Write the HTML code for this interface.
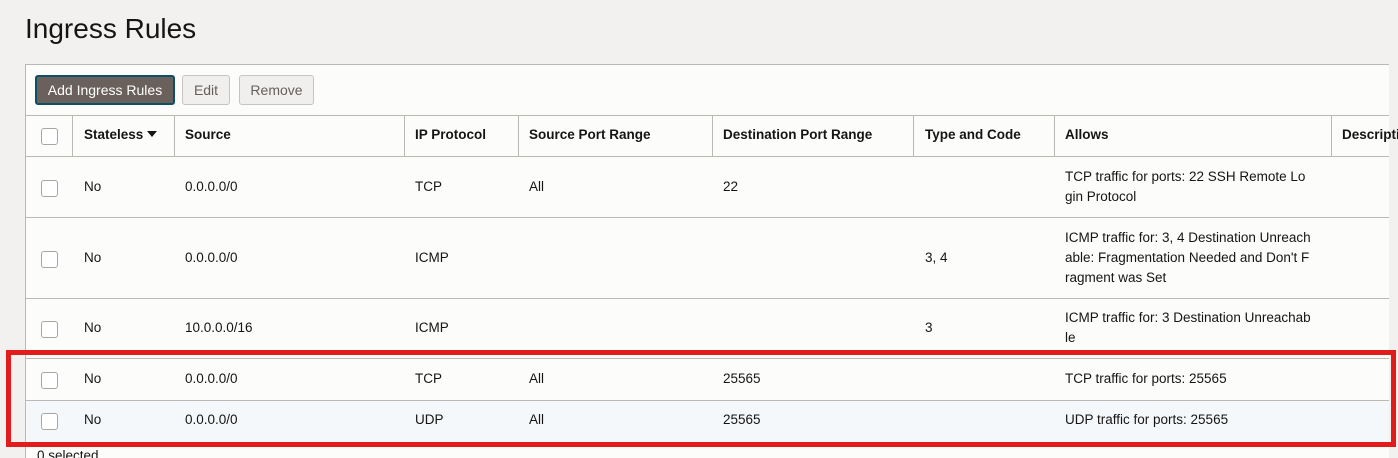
<!DOCTYPE html>
<html><head><style>
html,body{margin:0;width:1398px;height:458px;overflow:hidden}
body{background:#f2f1f0;font-family:"Liberation Sans",Arial,sans-serif;color:#161513;position:relative}
h1{position:absolute;left:25px;top:13px;margin:0;font-size:28px;font-weight:normal;color:#161513}
.panel{position:absolute;left:25px;top:64px;width:1363px;height:400px;background:#fcfcfb;border:1px solid #bcb9b5;border-right:none}
.btn{position:absolute;top:10px;height:30px;box-sizing:border-box;border:1px solid #c8c5c1;border-radius:3px;background:#f1efed;color:#65605b;font-size:14px;line-height:28px;text-align:center}
.abs{position:absolute}
.hl{position:absolute;left:0;width:1363px;height:1px;background:#bcb9b5}
.vl{position:absolute;top:50px;height:41px;width:1px;background:#bcb9b5}
.cb{position:absolute;left:15px;width:15px;height:15px;border:1px solid #a9a6a2;border-radius:3px;background:#fff}
.t{position:absolute;font-size:13.5px;line-height:20px;white-space:nowrap}
.h{font-weight:bold}
</style></head><body>
<h1>Ingress Rules</h1>
<div class="panel">
<div class="btn" style="left:9px;width:140px;background:#6a615c;color:#fff;border:2px solid #0d4f63;line-height:26px">Add Ingress Rules</div>
<div class="btn" style="left:156px;width:48px">Edit</div>
<div class="btn" style="left:213px;width:75px">Remove</div>
<div class="hl" style="top:50px"></div>
<div class="vl" style="left:46px"></div><div class="vl" style="left:148px"></div><div class="vl" style="left:378px"></div><div class="vl" style="left:492px"></div><div class="vl" style="left:686px"></div><div class="vl" style="left:887px"></div><div class="vl" style="left:1028px"></div><div class="vl" style="left:1305px"></div>
<div class="hl" style="top:91px"></div>
<div class="cb" style="top:63px"></div>
<div class="t h" style="left:58px;top:60px">Stateless <svg width="10" height="6" style="vertical-align:2px"><path d="M0 0H10L5 6Z" fill="#161513"/></svg></div>
<div class="t h" style="left:159px;top:60px">Source</div>
<div class="t h" style="left:389px;top:60px">IP Protocol</div>
<div class="t h" style="left:503px;top:60px">Source Port Range</div>
<div class="t h" style="left:697px;top:60px">Destination Port Range</div>
<div class="t h" style="left:899px;top:60px">Type and Code</div>
<div class="t h" style="left:1039px;top:60px">Allows</div>
<div class="t h" style="left:1316px;top:60px">Description</div>

<div class="cb" style="top:115px"></div>
<div class="t" style="left:58px;top:112px">No</div><div class="t" style="left:159px;top:112px">0.0.0.0/0</div><div class="t" style="left:389px;top:112px">TCP</div><div class="t" style="left:503px;top:112px">All</div><div class="t" style="left:697px;top:112px">22</div>
<div class="t" style="left:1039px;top:102px">TCP traffic for ports: 22 SSH Remote Lo<br>gin Protocol</div>
<div class="hl" style="top:152px"></div>

<div class="cb" style="top:186px"></div>
<div class="t" style="left:58px;top:183px">No</div><div class="t" style="left:159px;top:183px">0.0.0.0/0</div><div class="t" style="left:389px;top:183px">ICMP</div><div class="t" style="left:899px;top:183px">3, 4</div>
<div class="t" style="left:1039px;top:163px">ICMP traffic for: 3, 4 Destination Unreach<br>able: Fragmentation Needed and Don't F<br>ragment was Set</div>
<div class="hl" style="top:233px"></div>

<div class="cb" style="top:256px"></div>
<div class="t" style="left:58px;top:253px">No</div><div class="t" style="left:159px;top:253px">10.0.0.0/16</div><div class="t" style="left:389px;top:253px">ICMP</div><div class="t" style="left:899px;top:253px">3</div>
<div class="t" style="left:1039px;top:243px">ICMP traffic for: 3 Destination Unreachab<br>le</div>
<div class="hl" style="top:293px"></div>

<div class="cb" style="top:307px"></div>
<div class="t" style="left:58px;top:304px">No</div><div class="t" style="left:159px;top:304px">0.0.0.0/0</div><div class="t" style="left:389px;top:304px">TCP</div><div class="t" style="left:503px;top:304px">All</div><div class="t" style="left:697px;top:304px">25565</div><div class="t" style="left:1039px;top:304px">TCP traffic for ports: 25565</div>
<div class="hl" style="top:335px"></div>
<div class="abs" style="left:0;top:336px;width:1363px;height:41px;background:#f4f8fb"></div>
<div class="cb" style="top:348px"></div>
<div class="t" style="left:58px;top:345px">No</div><div class="t" style="left:159px;top:345px">0.0.0.0/0</div><div class="t" style="left:389px;top:345px">UDP</div><div class="t" style="left:503px;top:345px">All</div><div class="t" style="left:697px;top:345px">25565</div><div class="t" style="left:1039px;top:345px">UDP traffic for ports: 25565</div>
<div class="t" style="left:11px;top:381px">0 selected</div>
</div>
<div class="abs" style="left:6px;top:350px;width:1380px;height:87px;border:5px solid #e21b1b"></div>
</body></html>
